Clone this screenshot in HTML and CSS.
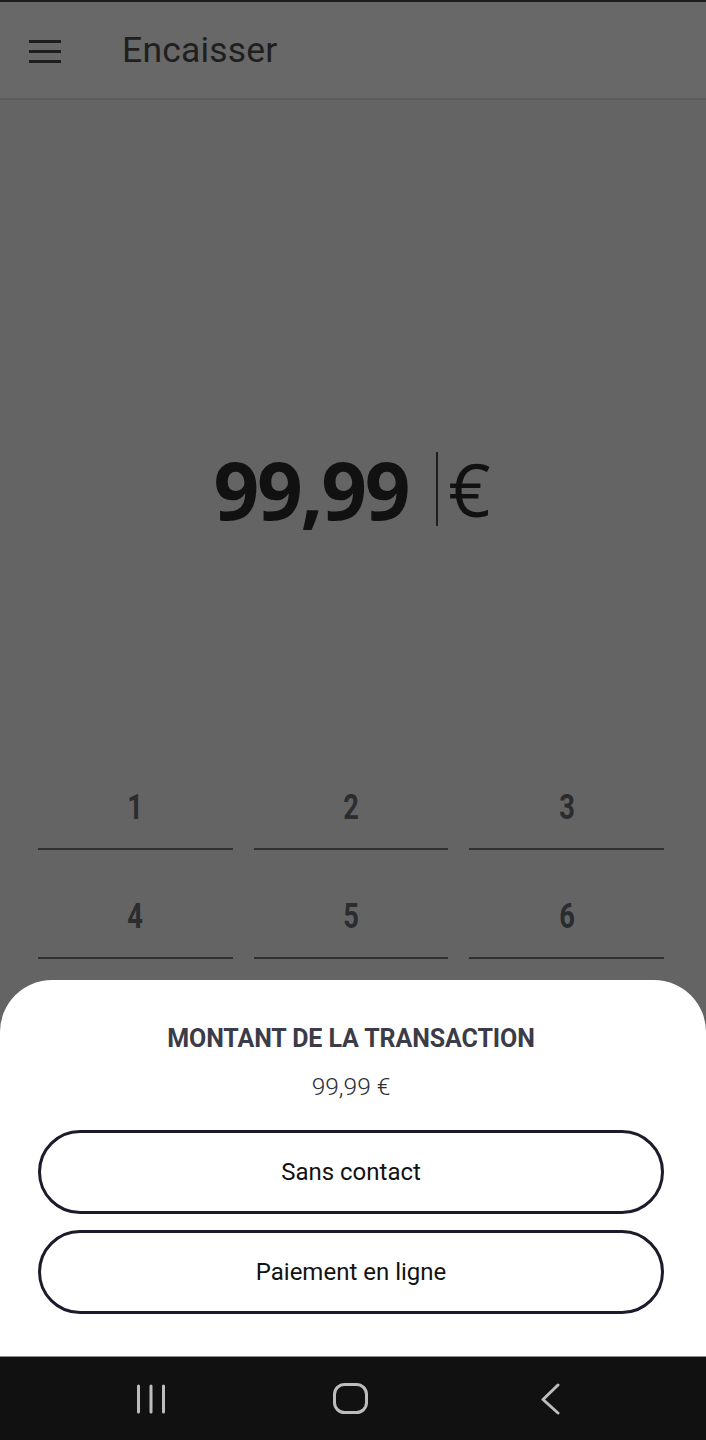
FILE: index.html
```html
<!DOCTYPE html>
<html lang="fr">
<head>
<meta charset="utf-8">
<title>Encaisser</title>
<link rel="stylesheet" href="styles.css">
</head>
<body>
<div class="app">
  <div class="topline"></div>
  <header class="appbar">
    <button class="menu" aria-label="Menu">
      <svg width="34" height="24" viewBox="0 0 34 24"><path d="M1 2.5H33M1 12.5H33M1 22.5H33" stroke="#1e1e1e" stroke-width="3" fill="none"/></svg>
    </button>
    <h1 class="title">Encaisser</h1>
  </header>
  <main class="main">
    <div class="amount">
      <span class="amount-value">99,99</span>
      <span class="caret"></span>
      <span class="amount-currency">€</span>
    </div>
    <div class="keypad">
      <div class="key"><span>1</span></div>
      <div class="key"><span>2</span></div>
      <div class="key"><span>3</span></div>
      <div class="key"><span>4</span></div>
      <div class="key"><span>5</span></div>
      <div class="key"><span>6</span></div>
    </div>
    <section class="sheet">
      <h2 class="sheet-title">MONTANT DE LA TRANSACTION</h2>
      <p class="sheet-amount">99,99 €</p>
      <button class="pill">Sans contact</button>
      <button class="pill">Paiement en ligne</button>
    </section>
  </main>
  <nav class="navbar">
    <div class="nav-cell">
      <svg width="32" height="32" viewBox="0 0 32 32"><path d="M3.5 3V29M16 3V29M28.5 3V29" stroke="#bdbdbd" stroke-width="3" stroke-linecap="round" fill="none"/></svg>
    </div>
    <div class="nav-cell">
      <svg width="38" height="34" viewBox="0 0 38 34"><rect x="2.5" y="2.5" width="32" height="28" rx="10" stroke="#bdbdbd" stroke-width="3" fill="none"/></svg>
    </div>
    <div class="nav-cell">
      <svg width="22" height="32" viewBox="0 0 22 32"><path d="M18 2L3 16.5L18 30" stroke="#bdbdbd" stroke-width="3" stroke-linecap="round" stroke-linejoin="round" fill="none"/></svg>
    </div>
  </nav>
</div>
</body>
</html>
```

FILE: styles.css
```css
* { box-sizing: border-box; }
html, body { margin: 0; padding: 0; }
body {
  width: 706px;
  height: 1440px;
  overflow: hidden;
  font-family: Roboto, "Noto Sans", sans-serif;
  background: #646464;
}
.app {
  display: flex;
  flex-direction: column;
  height: 1440px;
}
.topline { height: 2px; background: #1c1c1c; }
.appbar {
  height: 98px;
  background: #686868;
  border-bottom: 2px solid #5c5c5c;
  display: flex;
  align-items: center;
  padding-left: 28px;
}
.menu {
  border: 0;
  background: none;
  padding: 0;
  width: 34px;
  height: 24px;
  display: flex;
  margin-top: 2px;
}
.title {
  margin: 0 0 0 60px;
  font-size: 35.5px;
  font-weight: 400;
  color: #1f1f1f;
  letter-spacing: 0.2px;
}
.main {
  flex: 1;
  position: relative;
  overflow: hidden;
  background: #646464;
}
.amount {
  margin-top: 352px;
  height: 74px;
  display: flex;
  justify-content: center;
  align-items: center;
  color: #111;
  font-family: "Open Sans", "Noto Sans", sans-serif;
  padding-right: 2px;
}
.amount-value {
  font-size: 80px;
  font-weight: 700;
  line-height: 74px;
  letter-spacing: -2.2px;
}
.caret {
  width: 2px;
  height: 74px;
  background: #1e1e1e;
  margin: 0 10px 0 28px;
}
.amount-currency {
  font-size: 74px;
  font-weight: 400;
  line-height: 74px;
}
.keypad {
  margin-top: 215px;
  padding: 0 42px 0 38px;
  display: grid;
  grid-template-columns: repeat(3, 1fr);
  column-gap: 21px;
}
.key {
  height: 109px;
  border-bottom: 2px solid #2e3032;
  padding-top: 49px;
  text-align: center;
}
.key span {
  display: inline-block;
  font-size: 35px;
  line-height: 35px;
  font-weight: 700;
  color: #2a2c2f;
  transform: scaleX(0.78);
}
.sheet {
  position: absolute;
  left: 0;
  right: 0;
  bottom: 0;
  height: 376px;
  background: #fff;
  border-radius: 52px 52px 0 0;
  display: flex;
  flex-direction: column;
  align-items: center;
  padding: 45px 42px 0 38px;
}
.sheet-title {
  margin: 0;
  font-size: 25px;
  line-height: 28px;
  font-weight: 700;
  color: #3b3c47;
  letter-spacing: -0.1px;
}
.sheet-amount {
  margin: 20px 0 0 0;
  font-size: 24.5px;
  line-height: 28px;
  font-weight: 300;
  color: #2e2e33;
}
.pill {
  width: 100%;
  height: 84px;
  margin-top: 16px;
  border: 3px solid #1b1b2b;
  border-radius: 42px;
  background: #fff;
  font-family: Roboto, "Noto Sans", sans-serif;
  font-size: 24px;
  color: #121212;
  padding: 0;
}
.sheet-amount + .pill { margin-top: 29px; }
.navbar {
  height: 84px;
  background: #111;
  border-top: 1px solid #8a8a8a;
  display: flex;
  justify-content: center;
  align-items: center;
  padding-right: 4px;
}
.nav-cell {
  width: 200px;
  display: flex;
  justify-content: center;
  align-items: center;
}
```
